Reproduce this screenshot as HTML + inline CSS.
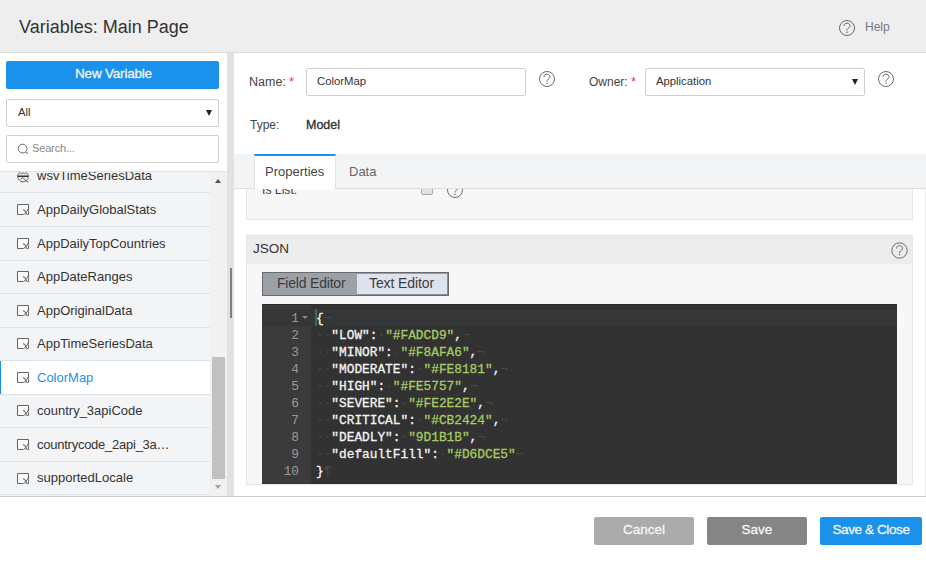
<!DOCTYPE html>
<html><head><meta charset="utf-8">
<style>
*{box-sizing:border-box;margin:0;padding:0}
html,body{width:926px;height:562px;overflow:hidden;background:#fff;font-family:"Liberation Sans",sans-serif;color:#333}
.a{position:absolute}
.t{position:absolute;white-space:nowrap;line-height:1}
#hdr{left:0;top:0;width:926px;height:53px;background:#eeeeee;border-bottom:1px solid #dcdcdc}
.help{position:absolute;border:1.3px solid #666;border-radius:50%;}
.help span{position:absolute;left:0;right:0;text-align:center;font-size:12px;color:#666}
.btn{position:absolute;border-radius:2px;color:#f5f5f5;text-align:center;font-size:13.5px;-webkit-text-stroke:0.3px #f5f5f5}
.inp{position:absolute;border:1px solid #cfcfcf;border-radius:2px;background:#fff}
.item{position:absolute;left:0;width:210px;height:34px}
.sep{position:absolute;left:0;width:210px;height:1px;background:#dde4e9}
.ico{position:absolute;left:17px;width:12px;height:11px;border:1.5px solid #6a6a6a;border-radius:1px;background:#fafafa}
.ico i{position:absolute;right:0px;bottom:-1px;font-family:"Liberation Serif",serif;font-style:italic;font-size:9px;color:#555;line-height:1}
.itxt{position:absolute;left:37px;font-size:13px;color:#333;white-space:nowrap;line-height:1}
.code{position:absolute;font-family:"Liberation Mono",monospace;font-size:12.8px;white-space:pre;line-height:17px;color:#f4f4f4;-webkit-text-stroke:0.3px}
.s{color:#a6ca64}
.ln{position:absolute;font-family:"Liberation Mono",monospace;font-size:12.8px;line-height:17px;color:#9a9a9a;text-align:right;width:37px}
.iv{font-style:normal;color:#484848;-webkit-text-stroke:0}
</style></head><body>
<!-- header -->
<div id="hdr" class="a"></div>
<div class="t" style="left:19px;top:18px;font-size:18px;color:#333">Variables: Main Page</div>
<svg class="a" style="left:839px;top:20px" width="16" height="16" viewBox="0 0 16 16"><circle cx="8.0" cy="8.0" r="7.5" fill="none" stroke="#6b6b6b" stroke-width="1"/><path d="M5.0 6.0 C5.0 4.0 6.3 3.2 8.0 3.2 C9.8 3.2 11.0 4.3 11.0 5.8 C11.0 7.3 9.8 7.8 8.8 8.5 C8.1 9.0 8.0 9.6 8.0 10.5" fill="none" stroke="#6b6b6b" stroke-width="1"/><circle cx="8.0" cy="12.3" r="0.75" fill="#6b6b6b"/></svg>
<div class="t" style="left:865px;top:21px;font-size:12px;color:#777">Help</div>

<!-- left panel -->
<div class="btn" style="left:6px;top:61px;width:213px;height:28px;background:#1a91eb;line-height:26px;letter-spacing:-0.2px;padding-left:2px">New Variable</div>
<div class="inp" style="left:6px;top:99px;width:213px;height:28px"></div>
<div class="t" style="left:18px;top:107px;font-size:11.3px;color:#333">All</div>
<div class="a" style="left:206px;top:110px;width:0;height:0;border-left:3.5px solid transparent;border-right:3.5px solid transparent;border-top:6px solid #222"></div>
<div class="inp" style="left:6px;top:135px;width:213px;height:28px"></div>
<svg class="a" style="left:17px;top:143px" width="13" height="13" viewBox="0 0 13 13"><circle cx="5.6" cy="5.6" r="4.4" fill="none" stroke="#6a6a6a" stroke-width="1"/><line x1="8.8" y1="8.8" x2="10.6" y2="10.6" stroke="#6a6a6a" stroke-width="1.1"/></svg>
<div class="t" style="left:32px;top:143px;font-size:11px;color:#888;letter-spacing:-0.15px">Search...</div>

<!-- list -->
<div class="a" style="left:0;top:171px;width:210px;height:325px;background:#f3f4f6"></div>
<div class="a" style="left:0;top:171px;width:227px;height:1px;background:#e2e2e2"></div>
<div class="a" style="left:0;top:172px;width:210px;height:20px;overflow:hidden"><div class="t" style="left:37px;top:-3px;font-size:13px;color:#333">wsvTimeSeriesData</div></div>
<svg class="a" style="left:16px;top:172px" width="14" height="11" viewBox="0 0 14 11"><g fill="none" stroke="#6a6a6a" stroke-width="1"><circle cx="7" cy="4.5" r="5.3"/><path d="M4.5 2.2 Q7 -0.5 9.5 2.2"/><path d="M4.5 7 L7 5.5 L10 9 L12.5 10"/></g><rect x="1.5" y="3.5" width="11" height="1.5" fill="#333"/></svg>
<div class="sep" style="top:192px"></div>
<div class="sep" style="top:226px"></div>
<div class="sep" style="top:260px"></div>
<div class="sep" style="top:293px"></div>
<div class="sep" style="top:327px"></div>
<div class="sep" style="top:360px"></div>
<div class="sep" style="top:394px"></div>
<div class="sep" style="top:427px"></div>
<div class="sep" style="top:461px"></div>
<div class="sep" style="top:494px"></div>
<svg class="a" style="left:16px;top:203px" width="14" height="13" viewBox="0 0 14 13"><rect x="1.5" y="1.5" width="11" height="10" rx="0.6" fill="#fbfbfb" stroke="#666" stroke-width="1.05"/><path d="M7 6.9 L8.3 6.9 L10.8 11.6 M12.3 6.9 L7.8 11.6" fill="none" stroke="#fbfbfb" stroke-width="2"/><path d="M6.9 6.9 L8.4 6.9 L10.9 11.5 M11.2 6.8 L12.6 6.8 M12.2 6.9 L7.9 11.5" fill="none" stroke="#555" stroke-width="1"/></svg>
<div class="itxt" style="top:203px">AppDailyGlobalStats</div>
<svg class="a" style="left:16px;top:237px" width="14" height="13" viewBox="0 0 14 13"><rect x="1.5" y="1.5" width="11" height="10" rx="0.6" fill="#fbfbfb" stroke="#666" stroke-width="1.05"/><path d="M7 6.9 L8.3 6.9 L10.8 11.6 M12.3 6.9 L7.8 11.6" fill="none" stroke="#fbfbfb" stroke-width="2"/><path d="M6.9 6.9 L8.4 6.9 L10.9 11.5 M11.2 6.8 L12.6 6.8 M12.2 6.9 L7.9 11.5" fill="none" stroke="#555" stroke-width="1"/></svg>
<div class="itxt" style="top:237px">AppDailyTopCountries</div>
<svg class="a" style="left:16px;top:270px" width="14" height="13" viewBox="0 0 14 13"><rect x="1.5" y="1.5" width="11" height="10" rx="0.6" fill="#fbfbfb" stroke="#666" stroke-width="1.05"/><path d="M7 6.9 L8.3 6.9 L10.8 11.6 M12.3 6.9 L7.8 11.6" fill="none" stroke="#fbfbfb" stroke-width="2"/><path d="M6.9 6.9 L8.4 6.9 L10.9 11.5 M11.2 6.8 L12.6 6.8 M12.2 6.9 L7.9 11.5" fill="none" stroke="#555" stroke-width="1"/></svg>
<div class="itxt" style="top:270px">AppDateRanges</div>
<svg class="a" style="left:16px;top:304px" width="14" height="13" viewBox="0 0 14 13"><rect x="1.5" y="1.5" width="11" height="10" rx="0.6" fill="#fbfbfb" stroke="#666" stroke-width="1.05"/><path d="M7 6.9 L8.3 6.9 L10.8 11.6 M12.3 6.9 L7.8 11.6" fill="none" stroke="#fbfbfb" stroke-width="2"/><path d="M6.9 6.9 L8.4 6.9 L10.9 11.5 M11.2 6.8 L12.6 6.8 M12.2 6.9 L7.9 11.5" fill="none" stroke="#555" stroke-width="1"/></svg>
<div class="itxt" style="top:304px">AppOriginalData</div>
<svg class="a" style="left:16px;top:337px" width="14" height="13" viewBox="0 0 14 13"><rect x="1.5" y="1.5" width="11" height="10" rx="0.6" fill="#fbfbfb" stroke="#666" stroke-width="1.05"/><path d="M7 6.9 L8.3 6.9 L10.8 11.6 M12.3 6.9 L7.8 11.6" fill="none" stroke="#fbfbfb" stroke-width="2"/><path d="M6.9 6.9 L8.4 6.9 L10.9 11.5 M11.2 6.8 L12.6 6.8 M12.2 6.9 L7.9 11.5" fill="none" stroke="#555" stroke-width="1"/></svg>
<div class="itxt" style="top:337px">AppTimeSeriesData</div>
<div class="a" style="left:0;top:361px;width:210px;height:33px;background:#fff"></div>
<div class="a" style="left:0;top:361px;width:1px;height:33px;background:#1a8fe8"></div>
<svg class="a" style="left:16px;top:371px" width="14" height="13" viewBox="0 0 14 13"><rect x="1.5" y="1.5" width="11" height="10" rx="0.6" fill="#fbfbfb" stroke="#666" stroke-width="1.05"/><path d="M7 6.9 L8.3 6.9 L10.8 11.6 M12.3 6.9 L7.8 11.6" fill="none" stroke="#fbfbfb" stroke-width="2"/><path d="M6.9 6.9 L8.4 6.9 L10.9 11.5 M11.2 6.8 L12.6 6.8 M12.2 6.9 L7.9 11.5" fill="none" stroke="#555" stroke-width="1"/></svg>
<div class="itxt" style="top:371px;color:#1e90ea">ColorMap</div>
<svg class="a" style="left:16px;top:404px" width="14" height="13" viewBox="0 0 14 13"><rect x="1.5" y="1.5" width="11" height="10" rx="0.6" fill="#fbfbfb" stroke="#666" stroke-width="1.05"/><path d="M7 6.9 L8.3 6.9 L10.8 11.6 M12.3 6.9 L7.8 11.6" fill="none" stroke="#fbfbfb" stroke-width="2"/><path d="M6.9 6.9 L8.4 6.9 L10.9 11.5 M11.2 6.8 L12.6 6.8 M12.2 6.9 L7.9 11.5" fill="none" stroke="#555" stroke-width="1"/></svg>
<div class="itxt" style="top:404px">country_3apiCode</div>
<svg class="a" style="left:16px;top:438px" width="14" height="13" viewBox="0 0 14 13"><rect x="1.5" y="1.5" width="11" height="10" rx="0.6" fill="#fbfbfb" stroke="#666" stroke-width="1.05"/><path d="M7 6.9 L8.3 6.9 L10.8 11.6 M12.3 6.9 L7.8 11.6" fill="none" stroke="#fbfbfb" stroke-width="2"/><path d="M6.9 6.9 L8.4 6.9 L10.9 11.5 M11.2 6.8 L12.6 6.8 M12.2 6.9 L7.9 11.5" fill="none" stroke="#555" stroke-width="1"/></svg>
<div class="itxt" style="top:438px;letter-spacing:-0.25px">countrycode_2api_3a…</div>
<svg class="a" style="left:16px;top:472px" width="14" height="13" viewBox="0 0 14 13"><rect x="1.5" y="1.5" width="11" height="10" rx="0.6" fill="#fbfbfb" stroke="#666" stroke-width="1.05"/><path d="M7 6.9 L8.3 6.9 L10.8 11.6 M12.3 6.9 L7.8 11.6" fill="none" stroke="#fbfbfb" stroke-width="2"/><path d="M6.9 6.9 L8.4 6.9 L10.9 11.5 M11.2 6.8 L12.6 6.8 M12.2 6.9 L7.9 11.5" fill="none" stroke="#555" stroke-width="1"/></svg>
<div class="itxt" style="top:471px">supportedLocale</div>

<!-- inner scrollbar -->
<div class="a" style="left:210px;top:172px;width:17px;height:324px;background:#f1f1f1"></div>
<div class="a" style="left:215px;top:179px;width:0;height:0;border-left:3.5px solid transparent;border-right:3.5px solid transparent;border-bottom:4px solid #505050"></div>
<div class="a" style="left:212px;top:357px;width:13px;height:122px;background:#c1c1c1"></div>
<div class="a" style="left:215px;top:485px;width:0;height:0;border-left:3.5px solid transparent;border-right:3.5px solid transparent;border-top:4px solid #a3a3a3"></div>

<!-- divider -->
<div class="a" style="left:227px;top:53px;width:7px;height:443px;background:#e2e2e2"></div>
<div class="a" style="left:230px;top:268px;width:2px;height:50px;background:#808080"></div>

<!-- right top -->
<div class="t" style="left:249px;top:76px;font-size:12.5px;color:#444">Name:</div>
<div class="t" style="left:289px;top:75px;font-size:13px;color:#f33">*</div>
<div class="inp" style="left:306px;top:68px;width:220px;height:28px"></div>
<div class="t" style="left:317px;top:76px;font-size:11.3px;color:#333">ColorMap</div>
<svg class="a" style="left:539px;top:71px" width="16" height="16" viewBox="0 0 16 16"><circle cx="8.0" cy="8.0" r="7.5" fill="none" stroke="#6b6b6b" stroke-width="1"/><path d="M5.0 6.0 C5.0 4.0 6.3 3.2 8.0 3.2 C9.8 3.2 11.0 4.3 11.0 5.8 C11.0 7.3 9.8 7.8 8.8 8.5 C8.1 9.0 8.0 9.6 8.0 10.5" fill="none" stroke="#6b6b6b" stroke-width="1"/><circle cx="8.0" cy="12.3" r="0.75" fill="#6b6b6b"/></svg>
<div class="t" style="left:589px;top:76px;font-size:12px;color:#444">Owner:</div>
<div class="t" style="left:631px;top:75px;font-size:13px;color:#f33">*</div>
<div class="inp" style="left:645px;top:68px;width:220px;height:28px"></div>
<div class="t" style="left:656px;top:76px;font-size:11.3px;color:#333">Application</div>
<div class="a" style="left:852px;top:79px;width:0;height:0;border-left:3.5px solid transparent;border-right:3.5px solid transparent;border-top:6px solid #222"></div>
<svg class="a" style="left:878px;top:71px" width="16" height="16" viewBox="0 0 16 16"><circle cx="8.0" cy="8.0" r="7.5" fill="none" stroke="#6b6b6b" stroke-width="1"/><path d="M5.0 6.0 C5.0 4.0 6.3 3.2 8.0 3.2 C9.8 3.2 11.0 4.3 11.0 5.8 C11.0 7.3 9.8 7.8 8.8 8.5 C8.1 9.0 8.0 9.6 8.0 10.5" fill="none" stroke="#6b6b6b" stroke-width="1"/><circle cx="8.0" cy="12.3" r="0.75" fill="#6b6b6b"/></svg>
<div class="t" style="left:250px;top:119px;font-size:12px;color:#444">Type:</div>
<div class="t" style="left:306px;top:119px;font-size:12.5px;color:#333;-webkit-text-stroke:0.35px #333">Model</div>

<!-- tabs -->
<div class="a" style="left:234px;top:154px;width:692px;height:35px;background:#f3f4f6;border-bottom:1px solid #dedede"></div>
<div class="a" style="left:254px;top:154px;width:82px;height:35px;background:#fff;border-top:2px solid #1a91eb;border-left:1px solid #e2e2e2;border-right:1px solid #e2e2e2"></div>
<div class="t" style="left:265px;top:165px;font-size:13px;color:#444">Properties</div>
<div class="t" style="left:349px;top:165px;font-size:13px;color:#666">Data</div>

<!-- content -->
<div class="a" style="left:234px;top:189px;width:692px;height:296px;overflow:hidden">
  <div class="a" style="left:12px;top:-40px;width:667px;height:71px;background:#f7f7f7;border:1px solid #e6e6e6"></div>
  <div class="t" style="left:28px;top:-5px;font-size:12.2px;color:#444">Is List:</div>
  <div class="a" style="left:187px;top:-6px;width:12px;height:12px;border:1px solid #aaa;border-radius:2px;background:#e2e2e2"></div>
  <svg class="a" style="left:213px;top:-7px" width="16" height="16" viewBox="0 0 16 16"><circle cx="8.0" cy="8.0" r="7.5" fill="none" stroke="#6b6b6b" stroke-width="1"/><path d="M5.0 6.0 C5.0 4.0 6.3 3.2 8.0 3.2 C9.8 3.2 11.0 4.3 11.0 5.8 C11.0 7.3 9.8 7.8 8.8 8.5 C8.1 9.0 8.0 9.6 8.0 10.5" fill="none" stroke="#6b6b6b" stroke-width="1"/><circle cx="8.0" cy="12.3" r="0.75" fill="#6b6b6b"/></svg>

  <div class="a" style="left:12px;top:46px;width:667px;height:250px;background:#f7f7f7;border:1px solid #e6e6e6"></div>
  <div class="a" style="left:13px;top:47px;width:665px;height:28px;background:#ececec"></div>
  <div class="t" style="left:19px;top:53px;font-size:13.5px;color:#333">JSON</div>
  <svg class="a" style="left:657px;top:53px" width="17" height="17" viewBox="0 0 17 17"><circle cx="8.5" cy="8.5" r="7.7" fill="none" stroke="#6b6b6b" stroke-width="1"/><path d="M5.5 6.5 C5.5 4.5 6.8 3.7 8.5 3.7 C10.3 3.7 11.5 4.8 11.5 6.3 C11.5 7.8 10.3 8.3 9.3 9.0 C8.6 9.5 8.5 10.1 8.5 11.0" fill="none" stroke="#6b6b6b" stroke-width="1"/><circle cx="8.5" cy="12.8" r="0.75" fill="#6b6b6b"/></svg>

  <div class="a" style="left:28px;top:83px;width:187px;height:24px;border:1px solid #6a6a6a;background:#dce3ee;box-shadow:inset -1px -1px 0 #8c8f94, inset 1px 1px 0 #9a9da2"></div>
  <div class="a" style="left:29px;top:84px;width:94px;height:22px;background:#9ca1a8"></div>
  <div class="t" style="left:43px;top:87px;font-size:14px;color:#3c3c3c;letter-spacing:-0.2px">Field Editor</div>
  <div class="t" style="left:135px;top:87px;font-size:14px;color:#3c3c3c;letter-spacing:-0.1px">Text Editor</div>

  <div class="a" style="left:28px;top:115px;width:635px;height:180px;background:#323232;overflow:hidden">
    <div class="a" style="left:0;top:0;width:49px;height:180px;background:#3b3b3b"></div>
    <div class="a" style="left:0;top:5px;width:635px;height:17px;background:#353637"></div><div class="a" style="left:0;top:0;width:635px;height:1px;background:#2a2a2a"></div>
    <div class="a" style="left:53px;top:5px;width:2px;height:17px;background:#4d6b2c"></div>
    <div class="ln" style="left:0;top:6px">1<br>2<br>3<br>4<br>5<br>6<br>7<br>8<br>9<br>10</div>
    <div class="a" style="left:40px;top:12px;width:0;height:0;border-left:3px solid transparent;border-right:3px solid transparent;border-top:3px solid #8a8a8a"></div>
    <div class="code" style="left:54px;top:6px">{<i class="iv">¬</i>
<i class="iv">··</i>"LOW":<i class="iv">·</i><span class="s">"#FADCD9"</span>,<i class="iv">¬</i>
<i class="iv">··</i>"MINOR":<i class="iv">·</i><span class="s">"#F8AFA6"</span>,<i class="iv">¬</i>
<i class="iv">··</i>"MODERATE":<i class="iv">·</i><span class="s">"#FE8181"</span>,<i class="iv">¬</i>
<i class="iv">··</i>"HIGH":<i class="iv">·</i><span class="s">"#FE5757"</span>,<i class="iv">¬</i>
<i class="iv">··</i>"SEVERE":<i class="iv">·</i><span class="s">"#FE2E2E"</span>,<i class="iv">¬</i>
<i class="iv">··</i>"CRITICAL":<i class="iv">·</i><span class="s">"#CB2424"</span>,<i class="iv">¬</i>
<i class="iv">··</i>"DEADLY":<i class="iv">·</i><span class="s">"9D1B1B"</span>,<i class="iv">¬</i>
<i class="iv">··</i>"defaultFill":<i class="iv">·</i><span class="s">"#D6DCE5"</span><i class="iv">¬</i>
}<i class="iv">¶</i></div>
  </div>
</div>

<div class="a" style="left:925px;top:189px;width:1px;height:307px;background:#ececec"></div>
<!-- footer -->
<div class="a" style="left:0;top:496px;width:926px;height:1px;background:#cccccc"></div>
<div class="btn" style="left:594px;top:517px;width:100px;height:28px;background:#ababab;line-height:26px">Cancel</div>
<div class="btn" style="left:707px;top:517px;width:100px;height:28px;background:#858585;line-height:26px">Save</div>
<div class="btn" style="left:820px;top:517px;width:102px;height:28px;background:#1a91eb;line-height:26px;letter-spacing:-0.4px">Save &amp; Close</div>
</body></html>
